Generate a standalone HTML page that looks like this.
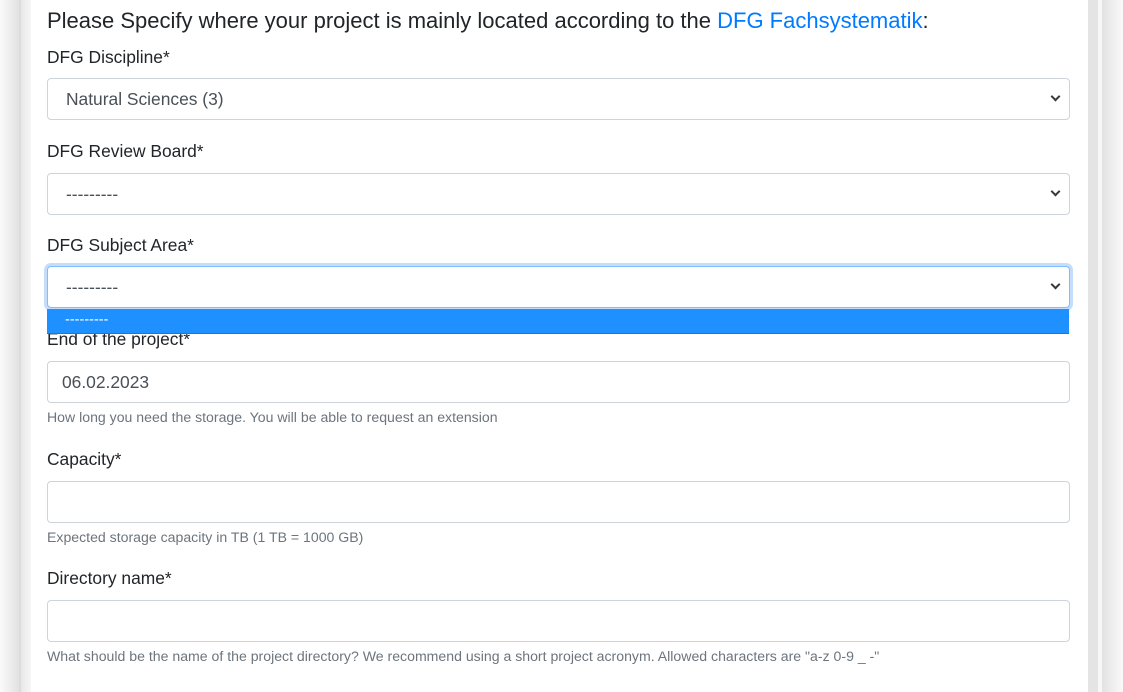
<!DOCTYPE html>
<html><head><style>
body{margin:0;width:1123px;height:692px;overflow:hidden;background:#fff;font-family:"Liberation Sans",sans-serif;position:relative}
.bgl{position:absolute;left:0;top:0;width:19px;height:692px;background:linear-gradient(to right,#fafafa,#e2e2e2)}
.bl{position:absolute;left:19px;top:0;width:2px;height:692px;background:#dcdcdc}
.bl2{position:absolute;left:21px;top:0;width:10px;height:692px;background:linear-gradient(to right,#e8e8e8,#f6f6f6)}
.br{position:absolute;left:1088px;top:0;width:10px;height:692px;background:#e4e4e4}
.br2{position:absolute;left:1098px;top:0;width:4px;height:692px;background:#f7f7f7}
.bgr{position:absolute;left:1102px;top:0;width:21px;height:692px;background:linear-gradient(to right,#e2e2e2,#fafafa)}
.t{position:absolute;left:47px;color:#212529;white-space:nowrap}
.h{font-size:22px;top:8px}
.lab{font-size:17.4px}
.help{font-size:14.1px;color:#6c757d}
.f{position:absolute;left:47px;width:1021px;height:40px;border:1px solid #ced4da;border-radius:4px;background:#fff;box-sizing:content-box}
.f span{position:absolute;left:18px;top:10px;font-size:17.4px;color:#495057}
.f i{position:absolute;right:10px;top:14px;width:5px;height:5px;border-right:2px solid #343a40;border-bottom:2px solid #343a40;transform:rotate(45deg)}
a{color:#007bff;text-decoration:none}
</style></head><body>
<div class="bgl"></div><div class="bl"></div><div class="bl2"></div>
<div class="br"></div><div class="br2"></div><div class="bgr"></div>
<div class="t h">Please Specify where your project is mainly located according to the <a>DFG Fachsystematik</a>:</div>
<div class="t lab" style="top:47px">DFG Discipline*</div>
<div class="f" style="top:78px"><span>Natural Sciences (3)</span><i></i></div>
<div class="t lab" style="top:141px">DFG Review Board*</div>
<div class="f" style="top:173px"><span>---------</span><i></i></div>
<div class="t lab" style="top:235px">DFG Subject Area*</div>
<div class="t lab" style="top:329px">End of the project*</div>
<div class="f" style="top:266px;border-color:#80bdff;box-shadow:0 0 0 3px #c4ddfb"><span>---------</span><i></i></div>
<div style="position:absolute;left:47px;top:309px;width:1022px;height:24px;background:#1e90ff;border-bottom:1px solid #666"><span style="position:absolute;left:18px;top:3px;font-size:14.5px;color:#fff">---------</span></div>
<div class="f" style="top:361px"><span style="left:14px;color:#495057">06.02.2023</span></div>
<div class="t help" style="top:409px">How long you need the storage. You will be able to request an extension</div>
<div class="t lab" style="top:449px">Capacity*</div>
<div class="f" style="top:481px"></div>
<div class="t help" style="top:529px">Expected storage capacity in TB (1 TB = 1000 GB)</div>
<div class="t lab" style="top:568px">Directory name*</div>
<div class="f" style="top:600px"></div>
<div class="t help" style="top:648px">What should be the name of the project directory? We recommend using a short project acronym. Allowed characters are "a-z 0-9 _ -"</div>
</body></html>
